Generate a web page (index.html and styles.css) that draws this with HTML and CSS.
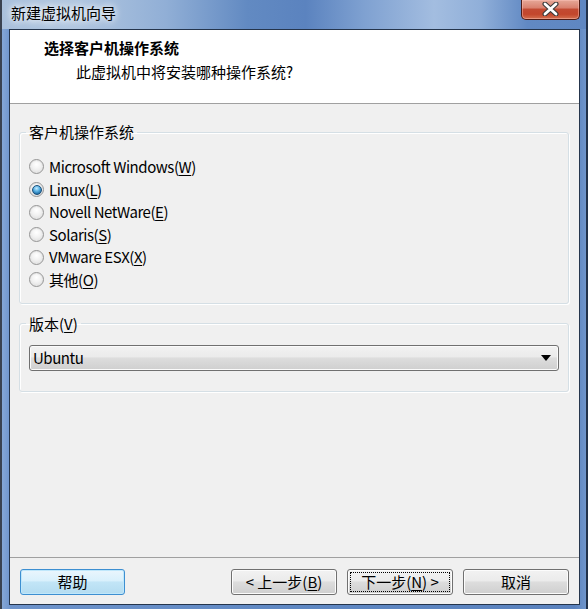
FILE: index.html
```html
<!DOCTYPE html>
<html lang="zh-CN">
<head>
<meta charset="utf-8">
<title>新建虚拟机向导</title>
<link rel="stylesheet" href="styles.css">
</head>
<body>
<div class="window">
  <div class="titlebar">
    <span class="title">新建虚拟机向导</span>
    <div class="close">
      <svg width="17" height="14" viewBox="0 0 17 14">
        <path d="M3 2 L14 12 M14 2 L3 12" stroke="#3a3a3a" stroke-width="5" stroke-linecap="round" fill="none"/>
        <path d="M3 2 L14 12 M14 2 L3 12" stroke="#ffffff" stroke-width="2.8" stroke-linecap="round" fill="none"/>
      </svg>
    </div>
  </div>
  <div class="frame">
    <div class="client">
      <div class="header">
        <div class="h-title">选择客户机操作系统</div>
        <div class="h-sub">此虚拟机中将安装哪种操作系统?</div>
      </div>
      <div class="body">
        <fieldset class="group group-os">
          <legend>客户机操作系统</legend>
          <div class="radio"><span class="rb"></span><span class="lat">Microsoft Windows(<u>W</u>)</span></div>
          <div class="radio"><span class="rb checked"></span><span class="lat">Linux(<u>L</u>)</span></div>
          <div class="radio"><span class="rb"></span><span class="lat">Novell NetWare(<u>E</u>)</span></div>
          <div class="radio"><span class="rb"></span><span class="lat">Solaris(<u>S</u>)</span></div>
          <div class="radio"><span class="rb"></span><span class="lat">VMware ESX(<u>X</u>)</span></div>
          <div class="radio"><span class="rb"></span><span class="lat">其他(<u>O</u>)</span></div>
        </fieldset>
        <fieldset class="group group-ver">
          <legend>版本(<u>V</u>)</legend>
          <div class="select"><span class="lat">Ubuntu</span><span class="arrow"></span></div>
        </fieldset>
      </div>
      <div class="sep"></div>
      <div class="buttons">
        <div class="btn btn-help">帮助</div>
        <div class="spacer"></div>
        <div class="btn">&lt;&nbsp;上一步(<u>B</u>)</div>
        <div class="btn btn-focus"><span class="focus">下一步(<u>N</u>)&nbsp;&gt;</span></div>
        <div class="btn">取消</div>
      </div>
    </div>
  </div>
</div>
</body>
</html>
```
FILE: styles.css
```css
* { box-sizing: border-box; }
html, body { margin: 0; padding: 0; }
body {
  width: 588px;
  height: 609px;
  overflow: hidden;
  background: #2d3540;
  font-family: "Noto Sans CJK SC", "Noto Sans", sans-serif;
  font-size: 15px;
  color: #000;
}
.window {
  width: 588px;
  height: 609px;
  display: flex;
  flex-direction: column;
  border-left: 2px solid #3a4250;
  border-right: 2px solid #22324a;
  background: linear-gradient(to right, #85a7d6 0%, #6d93cb 1.5%, #5f88c3 50%, #5a82be 98%, #6f95cb 100%);
}
.titlebar {
  height: 29px;
  display: flex;
  align-items: flex-start;
  padding-left: 9px;
  background: linear-gradient(to right, #a9c0dc 0%, #b2c7e0 12%, #91afd6 28%, #628ac2 42%, #5b83bf 52%, #7fa1d1 62%, #a3bde0 74%, #90afd9 82%, #6189c3 90%, #5f87c2 100%);
}
.title {
  line-height: 20px;
  padding-top: 3px;
  color: #000;
  text-shadow: 0 0 6px #ffffff, 0 0 10px #ffffff;
}
.close {
  margin-left: auto;
  margin-right: 6px;
  width: 59px;
  height: 20px;
  border: 1px solid #4e1c16;
  border-top: none;
  border-radius: 0 0 5px 5px;
  background: linear-gradient(#e6a898 0%, #d98270 40%, #c24a32 50%, #c3462c 75%, #d3704f 100%);
  box-shadow: inset 0 0 0 1px rgba(255, 200, 190, 0.45);
  display: flex;
  align-items: center;
  justify-content: center;
}
.close svg { display: block; margin-top: -1px; }
.frame {
  flex: 1;
  display: flex;
  padding: 0 6px 4px 7px;
}
.client {
  flex: 1;
  border: 1px solid #25354c;
  background: #f0f0f0;
  display: flex;
  flex-direction: column;
}
.header {
  height: 74px;
  background: #ffffff;
  border-bottom: 1px solid #a0a0a0;
  padding-top: 8px;
}
.h-title {
  font-weight: bold;
  line-height: 20px;
  padding-left: 34px;
}
.h-sub {
  line-height: 20px;
  margin-top: 4px;
  padding-left: 66px;
}
.body {
  display: flex;
  flex-direction: column;
}
.group {
  margin: 0 10px 0 9px;
  border: 1px solid #d5dfe5;
  border-radius: 3px;
  box-shadow: inset 1px 1px 0 #ffffff, 1px 1px 0 #ffffff;
  min-width: 0;
}
.group legend {
  line-height: 20px;
  padding: 0 3px;
  margin-left: -3px;
}
.group-os {
  margin-top: 18px;
  padding: 13.7px 9px 11.7px 9px;
}
.group-ver {
  margin-top: 10px;
  padding: 11px 9px 20px 9px;
}
.lat { letter-spacing: -0.45px; }
.radio {
  height: 22.6px;
  display: flex;
  align-items: center;
  gap: 5px;
  line-height: 20px;
}
.rb {
  width: 15px;
  height: 15px;
  flex: none;
  border-radius: 50%;
  border: 1px solid #959595;
  background: radial-gradient(circle at 50% 35%, #ffffff 0%, #f1f1f1 45%, #d8d8d8 100%);
  box-shadow: inset 0 0 0 1px #e6e6e6;
  display: flex;
  align-items: center;
  justify-content: center;
}
.rb.checked::after {
  content: "";
  width: 8px;
  height: 8px;
  border-radius: 50%;
  border: 1px solid #1b4f7a;
  background: radial-gradient(circle at 45% 30%, #c6ecff 0%, #5bb2e4 40%, #1c6aa2 80%, #0f4f80 100%);
}
.select {
  height: 26px;
  border: 1px solid #707070;
  border-radius: 3px;
  background: linear-gradient(#f2f2f2 0%, #ebebeb 45%, #dddddd 50%, #cfcfcf 100%);
  box-shadow: inset 0 0 0 1px #fbfbfb;
  display: flex;
  align-items: center;
  padding: 0 6px 0 3px;
  line-height: 20px;
}
.select .arrow {
  margin-left: auto;
  width: 0;
  height: 0;
  border-left: 5px solid transparent;
  border-right: 5px solid transparent;
  border-top: 6px solid #000;
  margin-right: 1px;
}
.sep {
  margin-top: auto;
  height: 1px;
  background: #a0a0a0;
}
.buttons {
  display: flex;
  align-items: center;
  gap: 10px;
  padding: 11px 10px 9px 10px;
}
.spacer { flex: 1; }
.btn {
  width: 106px;
  height: 26px;
  border: 1px solid #707070;
  border-radius: 3px;
  background: linear-gradient(#f2f2f2 0%, #ebebeb 45%, #dddddd 50%, #cfcfcf 100%);
  box-shadow: inset 0 0 0 1px #fcfcfc;
  display: flex;
  align-items: center;
  justify-content: center;
  line-height: 20px;
  padding: 2px;
}
.btn-help {
  width: 105px;
  border-color: #3d8fd1;
  background: linear-gradient(#eaf6fd 0%, #d9f0fc 45%, #c2e5f7 50%, #b4dcf1 100%);
  box-shadow: inset 0 0 0 1px #bfe7fb;
}
.btn-focus .focus {
  flex: 1;
  align-self: stretch;
  border: 1px dotted #000;
  display: flex;
  align-items: center;
  justify-content: center;
}
u { text-decoration: underline; text-underline-offset: 2px; }
```
